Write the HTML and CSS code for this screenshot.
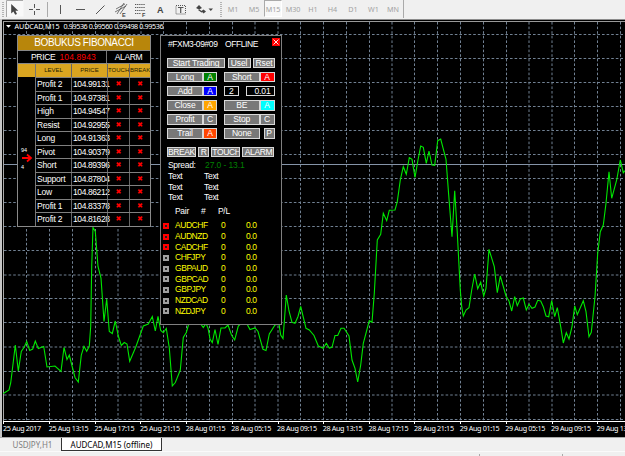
FILE: index.html
```
<!DOCTYPE html>
<html lang="en">
<head>
<meta charset="utf-8">
<title>AUDCAD,M15</title>
<link rel="stylesheet" href="styles.css">
</head>
<body>
<div class="toolbar">
<svg class="tools" width="220" height="19" viewBox="0 0 220 19">
<g fill="none" stroke="#b4b4b4" stroke-width="2" stroke-dasharray="1 1"><path d="M3 2V17M221 2V17"/></g>
<rect x="7" y="1" width="16.5" height="15.5" fill="#f8f8f8"/>
<path d="M6.5 17V.5H23" fill="none" stroke="#a8a8a8"/>
<path d="M11.2 4V13.6L13.4 11.5L15.2 14.8L17 14L15.4 10.8H18.3Z" fill="#444"/>
<g fill="none" stroke="#555">
<path d="M34.5 4V8M34.5 11V15M29 9.5H33M36 9.5H40"/>
<path d="M47.5 2V17" stroke="#aaa"/>
<path d="M60.5 5V14M76 9.5H85M96 14L104.500 5.500" />
<path d="M115 12L126 6M117 14L124 3M120 14L127 4M116 9L125 4" stroke-width=".8"/>
<path d="M135 4.500H145M135 7.500H145M135 10.500H145M135 13.500H141" stroke-dasharray="1.300 .8"/>
<path d="M176 5.500H185.500V14H176Z" stroke-dasharray="1 1"/>
<path d="M178 7.500H183.500M180.700 7.500V13" stroke-width="1.200"/>
</g>
<path d="M196 8L199 5L202 8L199 9.500ZM198 10L199.500 9.500L203 12L201.500 12.500ZM201.500 11L203.500 9.500L206 11.500L203.500 13.500ZM208.500 8.500H213L210.800 11Z" fill="#444"/>
<g class="glyph"><text x="122" y="16.500" font-size="5.500">E</text><text x="142" y="16.500" font-size="5.500">F</text><text x="157" y="13" font-size="9">A</text></g>
</svg>
<div class="frames"><span>M1</span><span>M5</span><span class="on">M15</span><span>M30</span><span>H1</span><span>H4</span><span>D1</span><span>W1</span><span>MN</span></div>
</div>
<div class="chart">
<svg width="625" height="418" viewBox="0 19 625 418">
<rect x="0" y="19" width="625" height="418" fill="#000"/>
<path d="M0 19.500H625" stroke="#8c8c8c"/>
<rect x="0" y="19" width="2" height="418" fill="#c6c6c6"/>
<path d="M3.500 21V421" stroke="#a9a9a9"/>
<path d="M3 21.500H625" stroke="#999"/>
<g class="grid"><path d="M4 34.5H625M4 58.5H625M4 82.5H625M4 106.5H625M4 130.5H625M4 154.5H625M4 178.5H625M4 202.5H625M4 226.5H625M4 250.5H625M4 275H625M4 298.5H625M4 322.5H625M4 347H625M4 371.5H625M4 395H625M4 419.5H625"/>
<path d="M26.5 22V421M49.5 22V421M72.5 22V421M95.5 22V421M118 22V421M141 22V421M163.5 22V421M186.5 22V421M209.5 22V421M232.5 22V421M255 22V421M278 22V421M300.5 22V421M323.5 22V421M346.5 22V421M369.5 22V421M392 22V421M414.500 22V421M437.5 22V421M460.5 22V421M483.5 22V421M506.5 22V421M529 22V421M552 22V421M574.5 22V421M597.5 22V421M620.5 22V421"/></g>
<path d="M4 164.500H625" stroke="#8594a8"/>
<polyline class="price" points="3.3,393.5 9,390 10.7,383 12.3,370 15.3,345 18.3,371 21.3,351.5 24.3,347 26.7,341.5 29.7,350.5 32.7,349 35.3,341 38.3,348.5 43.7,346.5 47,367 55,366 61,371.3 64,347.5 67,359.5 69.3,355 72.7,368.5 75,377.5 78.3,382 81.3,355 84,346.3 86.7,351.3 89.3,346 90.7,326.5 91.7,266.5 93,227.5 95.3,231.5 98,266.5 101,278 104,321.5 106.7,299 109.3,331.5 112.3,333.5 115.3,321 118.3,336 121.3,345.5 124.3,342.5 127,344 129.7,361.3 135.7,347.3 143.3,326 148.3,324 152.3,316.5 155.3,331 158,316.3 160.7,330.5 163.3,332.7 166.3,328.5 169.3,348 172.3,386 175.3,382.5 180.3,370 183.3,337.5 186.3,332.5 189,323 200,323 203.3,327.5 206,323.5 208,328 210,339 212.3,342.5 215,329.5 218,344.5 221,328 225,328 228,325 231.5,335 234.7,340 238.3,326 240.5,324 247,324 250,329.5 255,328 258,331.5 263,349.3 266,350.5 269.3,334 275,325 279,324 280.7,335 283,338.5 284.7,316.5 286.3,295 289,311 292,322.3 295,323.3 298,316.5 300.7,306.5 306,328.3 309.3,330 314,335.5 318.3,346 323.3,348.3 326.3,343.3 329.3,348 332,347.3 335,335.5 337.7,335.5 341,328.3 344,328.3 349,336 352,360 355,368.3 357.7,382 360.7,365 363.3,343.3 369.3,320.7 372,322.3 374.3,293.3 377.3,240 380.7,234.3 383.3,213.3 386.7,220.7 389.3,210.3 395,210 397.3,201.7 400.3,180 403.3,166.7 406.3,174.3 409.3,157.7 412,159.3 415,177.3 418,160 420.7,146 423.3,147.3 426.3,163.3 429,151 432,165 434.7,165.3 437.7,140.7 440.7,139 446,159.3 448.7,195 452,236.7 454.7,190.7 457.3,233 460.3,290 461.7,306.7 463.3,316 466,310 469,307.7 471.7,290 474.7,274 477.7,288.7 480.7,282.3 483.7,296 486,288.3 489,249.3 494.3,266.7 497.3,292.7 500.3,276 506,296 509,301 511.7,311 514.7,296.7 517.3,305.7 520.3,299 523.3,298 526.3,310 529,304.3 532,308.3 535,307 537.7,300.3 540.7,301 543.3,306.7 546,316 548.7,316.7 551.7,300.7 554.7,316.7 557.3,307.7 560.7,326.7 563.3,343 566.3,332.7 569,339 572,326.7 574.7,306 577.3,314.7 583.3,300.7 586,311.7 589,336.7 591.3,332.3 595,296.7 597.7,253.3 600.3,231.7 603.3,225 606,203.3 609,171.7 611.7,198.3 616.7,180 620.3,160 623.3,172.7 625,170.7"/>
<path d="M3 421.500H625M3.500 421V424M49.500 421V424M95.500 421V424M140.500 421V424M186.500 421V424M232.500 421V424M278.500 421V424M323.500 421V424M369.500 421V424M414.500 421V424M460.500 421V424M506.500 421V424M552.500 421V424M597.500 421V424" stroke="#fff"/>
<g class="axis">
<text x="3" y="430.500" textLength="38">25 Aug 2017</text><text x="48.700" y="430.500" textLength="40">25 Aug 13:15</text><text x="94.500" y="430.500" textLength="40">25 Aug 17:15</text><text x="140" y="430.500" textLength="40">25 Aug 21:15</text><text x="185.700" y="430.500" textLength="40">28 Aug 01:15</text><text x="231.300" y="430.500" textLength="40">28 Aug 05:15</text><text x="277" y="430.500" textLength="40">28 Aug 09:15</text><text x="322.700" y="430.500" textLength="40">28 Aug 13:15</text><text x="368.500" y="430.500" textLength="40">28 Aug 17:15</text><text x="414" y="430.500" textLength="40">28 Aug 21:15</text><text x="459.700" y="430.500" textLength="40">29 Aug 01:15</text><text x="505.300" y="430.500" textLength="40">29 Aug 05:15</text><text x="551" y="430.500" textLength="40">29 Aug 09:15</text><text x="596.700" y="430.500" textLength="40">29 Aug 13:15</text>
<path d="M6 25H11L8.500 27.800Z" fill="#fff"/>
<text x="14.500" y="29" textLength="45">AUDCAD,M15</text><text x="63.500" y="29" textLength="100">0.99536 0.99560 0.99498 0.99536</text>
</g>
</svg>

<div class="fib">
<div class="fib-title">BOBUKUS FIBONACCI</div>
<div class="fib-sub"><div class="now">PRICE <b>104.8943</b></div><div class="alarm">ALARM</div></div>
<div class="fib-main">
<div class="side"><div class="side-head"></div><div class="mark"><span>94</span><svg width="14" height="10" viewBox="0 0 14 10"><path d="M1 5H10M6 1.500L10 5L6 8.500" fill="none" stroke="#f00" stroke-width="1.800"/></svg><span>4</span></div></div>
<div class="levels">
<div class="row head"><i>LEVEL</i><i>PRICE</i><i>TOUCH</i><i>BREAK</i></div>
<div class="row"><span>Profit 2</span><span>104.99131</span><em>✖</em><em>✖</em></div>
<div class="row"><span>Profit 1</span><span>104.97381</span><em>✖</em><em>✖</em></div>
<div class="row"><span>High</span><span>104.94547</span><em>✖</em><em>✖</em></div>
<div class="row"><span>Resist</span><span>104.92955</span><em>✖</em><em>✖</em></div>
<div class="row"><span>Long</span><span>104.91363</span><em>✖</em><em>✖</em></div>
<div class="row"><span>Pivot</span><span>104.90379</span><em>✖</em><em>✖</em></div>
<div class="row"><span>Short</span><span>104.89396</span><em>✖</em><em>✖</em></div>
<div class="row"><span>Support</span><span>104.87804</span><em>✖</em><em>✖</em></div>
<div class="row"><span>Low</span><span>104.86212</span><em>✖</em><em>✖</em></div>
<div class="row"><span>Profit 1</span><span>104.83378</span><em>✖</em><em>✖</em></div>
<div class="row"><span>Profit 2</span><span>104.81628</span><em>✖</em><em>✖</em></div>
</div>
</div>
</div>

<div class="trade">
<div class="trade-head"><span>#FXM3-09#09</span><span>OFFLINE</span><svg class="close" width="8" height="8" viewBox="0 0 8 8"><rect width="8" height="8" fill="#f00"/><path d="M1.500 1.500L6.500 6.500M6.500 1.500L1.500 6.500" stroke="#fff" stroke-width=".9"/></svg></div>
<div class="btns top"><b>Start Trading</b><b>Usel</b><b>Rset</b></div>
<div class="btns pair"><b>Long</b><b class="green">A</b><b class="r">Short</b><b class="red">A</b></div>
<div class="btns add"><b>Add</b><b class="blue">A</b><b class="field r">2</b><b class="field lot">0.01</b></div>
<div class="btns pair"><b>Close</b><b class="orange">A</b><b class="r">BE</b><b class="cyan">A</b></div>
<div class="btns pair"><b>Profit</b><b>C</b><b class="r">Stop</b><b>C</b></div>
<div class="btns pair none"><b>Trail</b><b class="tomato">A</b><b class="r">None</b><b>P</b></div>
<div class="btns alerts"><b>BREAK</b><b>R</b><b>TOUCH</b><b>ALARM</b></div>
<div class="info spread"><span>Spread:</span><span class="val">27.0 - 13.1</span></div>
<div class="info"><span>Text</span><span>Text</span></div>
<div class="info"><span>Text</span><span>Text</span></div>
<div class="info"><span>Text</span><span>Text</span></div>
<div class="cols"><span>Pair</span><span>#</span><span>P/L</span></div>
<div class="pos hot"><i></i><span>AUDCHF</span><span>0</span><span>0.0</span></div>
<div class="pos hot"><i></i><span>AUDNZD</span><span>0</span><span>0.0</span></div>
<div class="pos hot"><i></i><span>CADCHF</span><span>0</span><span>0.0</span></div>
<div class="pos"><i></i><span>CHFJPY</span><span>0</span><span>0.0</span></div>
<div class="pos"><i></i><span>GBPAUD</span><span>0</span><span>0.0</span></div>
<div class="pos"><i></i><span>GBPCAD</span><span>0</span><span>0.0</span></div>
<div class="pos"><i></i><span>GBPJPY</span><span>0</span><span>0.0</span></div>
<div class="pos"><i></i><span>NZDCAD</span><span>0</span><span>0.0</span></div>
<div class="pos"><i></i><span>NZDJPY</span><span>0</span><span>0.0</span></div>
</div>
</div>
<div class="tabs"><span>USDJPY,H1</span><span class="on">AUDCAD,M15 (offline)</span></div>
<div class="status"><i></i><i></i></div>
</body>
</html>
```
FILE: styles.css
```
* { box-sizing: border-box; }
html, body { margin: 0; width: 625px; height: 456px; overflow: hidden; background: #f0f0f0; }
body { font-family: "Liberation Sans", sans-serif; display: flex; flex-direction: column; }
svg { display: block; }
b, i, em { font-weight: normal; font-style: normal; }

.toolbar { height: 19px; display: flex; background: #f0f0f0; flex: none; }
.tools { overflow: visible; flex: none; }
.glyph { fill: #444; font-family: "Liberation Sans", sans-serif; font-weight: bold; }
.frames { display: grid; grid-template-columns: 22px 20px 18px 22px 18px 21px 20px 21px 18px; margin-left: 2px; width: 182px; height: 18px; border-right: 1px solid #aaa; font: 7.2px/18px "Noto Sans", sans-serif; color: #a2a2a2; text-align: center; }
.frames .on { background: #f8f8f8; border: 1px solid #aaa; border-right-color: #fff; border-bottom-color: #fff; height: 17px; line-height: 16px; }

.chart { height: 418px; position: relative; flex: none; }
.grid { fill: none; stroke: #718193; stroke-width: 1; stroke-dasharray: 2.6 2; }
.price { fill: none; stroke: #00e800; stroke-width: 1.1; }
.axis { fill: #fff; font: 7.2px "Noto Sans", sans-serif; }

.fib { position: absolute; left: 17px; top: 16px; width: 134px; height: 192px; border: 1px solid #8a8a8a; background: #000; color: #fff; }
.fib-title { height: 14px; background: #b8860b; font-size: 10px; line-height: 14px; text-align: center; letter-spacing: -.4px; }
.fib-sub { height: 14px; display: flex; border-top: 1px solid #888; border-bottom: 1px solid #888; font-size: 8.5px; line-height: 13px; }
.now { width: 88px; padding-left: 13px; white-space: pre; letter-spacing: -.3px; }
.now b { color: #f00; margin-left: 2px; letter-spacing: .1px; }
.alarm { flex: 1; border-left: 1px solid #777; text-align: center; letter-spacing: -.4px; }
.fib-main { display: flex; }
.side { width: 17px; }
.side-head { height: 13px; background: #daa520; }
.mark { margin-top: 70px; padding-left: 3px; font-size: 5.5px; line-height: 6px; display: flex; flex-direction: column; }
.mark svg { margin: 0 0 1px; }
.levels { width: 115px; border-left: 1px solid #777; }
.row { display: grid; grid-template-columns: 35px 36px 22px 21px; height: 13.55px; border-top: 1px solid #808080; font-size: 8.5px; line-height: 12px; }
.row > * + * { border-left: 1px solid #666; }
.row span { padding-left: 1px; white-space: nowrap; letter-spacing: -.2px; }
.row em { color: #f00; text-align: center; font: 7px/12.5px "DejaVu Sans", sans-serif; }
.row span:nth-child(2) { letter-spacing: -.4px; }
.row.head { background: #daa520; color: #221a00; font-size: 6px; text-align: center; height: 13px; border-top: 0; }

.trade { position: absolute; left: 160px; top: 16px; width: 122px; height: 290px; border: 1px solid #808080; background: #000; color: #fff; font-size: 8.5px; letter-spacing: -.3px; }
.trade-head { display: flex; height: 21.5px; padding: 0 1px 0 7px; line-height: 16px; letter-spacing: -.4px; }
.trade-head span:first-child { width: 57px; }
.close { margin: 2px 0 0 auto; }
.btns { display: grid; height: 10.5px; margin: 0 6px 3.7px; line-height: 9px; letter-spacing: -.15px; }
.btns b { background: #787878; border: 1px solid #d8d8d8; text-align: center; white-space: nowrap; overflow: hidden; }
.top { grid-template-columns: 58px 23px 22px; column-gap: 2.5px; }
.pair { grid-template-columns: 36px 14px 42.5px 15px; }
.add { grid-template-columns: 36px 14px 21.5px 36px; }
.btns .r { margin-left: 7px; }
.btns .lot { margin-left: 7px; text-align: right; padding-right: 3px; }
.btns .field { background: #000; }
.none b:last-child { margin-left: 4px; }
.alerts { grid-template-columns: 29px 11px 29px 32px; justify-content: space-between; width: 107.5px; margin-top: 8px; margin-bottom: 3px; letter-spacing: -.4px; }
.btns .green { background: #008000; }
.btns .red { background: #f00; }
.btns .blue { background: #00f; }
.btns .orange { background: #ffa500; }
.btns .cyan { background: #0ff; }
.btns .tomato { background: #ff4500; }
.info { display: flex; height: 10.6px; padding-left: 7px; line-height: 11px; }
.info span:first-child { width: 36px; }
.info .val { color: #008000; letter-spacing: -.1px; margin-left: 1px; }
.cols { display: grid; grid-template-columns: 26px 17px 20px; padding-left: 14px; height: 17.5px; line-height: 17px; }
.pos { display: grid; grid-template-columns: 12px 46px 25px 20px; padding-left: 2px; height: 10.7px; line-height: 11px; color: #ff0; align-items: center; }
.pos span { letter-spacing: -.45px; }
.pos i { width: 6px; height: 6px; background: #222; border: 2px solid #a0a0a0; }
.pos.hot i { border-color: #f00; }

.tabs { display: flex; height: 14px; background: #f0f0f0; border-top: 1px solid #aaa; font: 8px/13px "Noto Sans", sans-serif; color: #808080; flex: none; }
.tabs span { width: 61px; text-align: center; padding-left: 4px; white-space: nowrap; }
.tabs .on { width: 101px; padding: 0; background: #fff; color: #000; border: 1px solid #333; border-top: 0; }
.status { display: flex; flex: 1; border-top: 1px solid #fafafa; padding: 2px 0 0 479px; gap: 82px; }
.status i { width: 1px; height: 3px; background: #aaa; }
```
